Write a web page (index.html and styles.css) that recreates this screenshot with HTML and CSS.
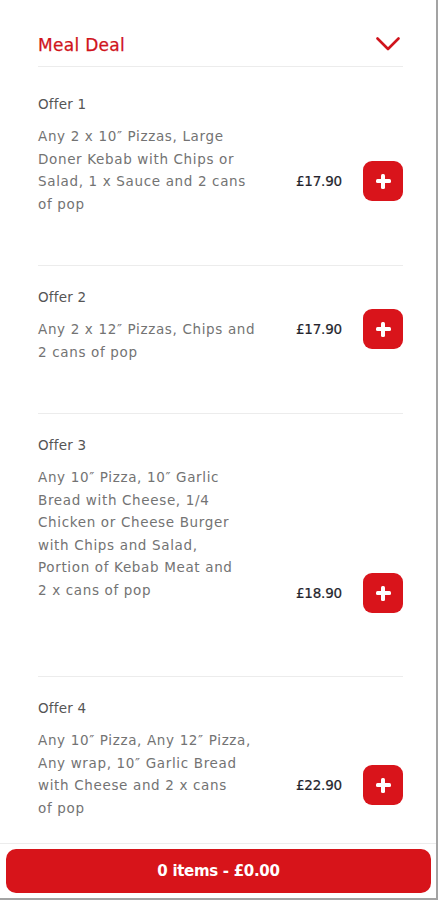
FILE: index.html
```html
<!DOCTYPE html>
<html lang="en">
<head>
<meta charset="utf-8">
<title>Meal Deal</title>
<link rel="stylesheet" href="styles.css">
</head>
<body>
<main class="page">
  <section class="category">
    <header class="category-head">
      <h2 class="category-title">Meal Deal</h2>
      <svg class="chevron" width="24" height="14" viewBox="0 0 24 14" aria-hidden="true">
        <polyline points="1.5,1.5 12,12 22.5,1.5" fill="none" stroke="#d0141c" stroke-width="2.6" stroke-linecap="round" stroke-linejoin="round"/>
      </svg>
    </header>
    <ul class="offers">
      <li class="offer offer--first">
        <h3 class="offer-title">Offer 1</h3>
        <p class="offer-desc">Any 2 x 10″ Pizzas, Large<br>Doner Kebab with Chips or<br>Salad, 1 x Sauce and 2 cans<br>of pop</p>
        <div class="offer-actions">
          <span class="offer-price">£17.90</span>
          <button class="add-btn" type="button" aria-label="Add Offer 1"><span class="plus"></span></button>
        </div>
      </li>
      <li class="offer">
        <h3 class="offer-title">Offer 2</h3>
        <p class="offer-desc">Any 2 x 12″ Pizzas, Chips and<br>2 cans of pop</p>
        <div class="offer-actions">
          <span class="offer-price">£17.90</span>
          <button class="add-btn" type="button" aria-label="Add Offer 2"><span class="plus"></span></button>
        </div>
      </li>
      <li class="offer offer--low">
        <h3 class="offer-title">Offer 3</h3>
        <p class="offer-desc">Any 10″ Pizza, 10″ Garlic<br>Bread with Cheese, 1/4<br>Chicken or Cheese Burger<br>with Chips and Salad,<br>Portion of Kebab Meat and<br>2 x cans of pop</p>
        <div class="offer-actions">
          <span class="offer-price">£18.90</span>
          <button class="add-btn" type="button" aria-label="Add Offer 3"><span class="plus"></span></button>
        </div>
      </li>
      <li class="offer">
        <h3 class="offer-title">Offer 4</h3>
        <p class="offer-desc">Any 10″ Pizza, Any 12″ Pizza,<br>Any wrap, 10″ Garlic Bread<br>with Cheese and 2 x cans<br>of pop</p>
        <div class="offer-actions">
          <span class="offer-price">£22.90</span>
          <button class="add-btn" type="button" aria-label="Add Offer 4"><span class="plus"></span></button>
        </div>
      </li>
    </ul>
  </section>
  <footer class="basket-bar">
    <button class="basket-btn" type="button">0 items - £0.00</button>
  </footer>
</main>
</body>
</html>
```

FILE: styles.css
```css
* {
  box-sizing: border-box;
}

html, body {
  margin: 0;
  padding: 0;
  background: #ffffff;
}

body {
  font-family: "DejaVu Sans", "Open Sans", sans-serif;
  color: #5a5a5a;
}

.page {
  width: 438px;
  min-height: 900px;
  padding: 0 33px 120px 38px;
  border-right: 2px solid #a3a3a3;
}

.category-head {
  display: flex;
  align-items: center;
  justify-content: space-between;
  padding: 33px 3px 9px 0;
  border-bottom: 1px solid #ececec;
}

.category-title {
  margin: 0;
  font-size: 17px;
  line-height: 24px;
  font-weight: normal;
  letter-spacing: 0.3px;
  color: #d0141c;
  -webkit-text-stroke: 0.25px #d0141c;
}

.chevron {
  display: block;
  margin-top: -2px;
}

.offers {
  list-style: none;
  margin: 0;
  padding: 0;
}

.offer {
  display: grid;
  grid-template-columns: 250px 1fr;
  grid-template-areas:
    "title actions"
    "desc actions";
  padding: 20px 0 50px;
  border-bottom: 1px solid #ececec;
}

.offer--first {
  padding-top: 26px;
}

.offer--low {
  padding-bottom: 75px;
}

.offer-title {
  grid-area: title;
  margin: 0 0 10px;
  font-size: 13.5px;
  line-height: 22px;
  font-weight: normal;
  letter-spacing: 0.2px;
  color: #555555;
}

.offer-desc {
  grid-area: desc;
  margin: 0;
  font-size: 13.5px;
  line-height: 22.5px;
  letter-spacing: 0.65px;
  color: #737373;
}

.offer-actions {
  grid-area: actions;
  justify-self: end;
  align-self: end;
  display: flex;
  align-items: center;
  gap: 21px;
  margin-bottom: 14px;
}

.offer--low .offer-actions {
  margin-bottom: -12px;
}

.offer-price {
  font-size: 13.5px;
  letter-spacing: -0.2px;
  color: #24242c;
  -webkit-text-stroke: 0.2px #24242c;
}

.add-btn {
  width: 40px;
  height: 40px;
  padding: 0;
  border: 0;
  border-radius: 9px;
  background: #d9141b;
  display: flex;
  align-items: center;
  justify-content: center;
  cursor: pointer;
}

.plus {
  position: relative;
  width: 15px;
  height: 15px;
}

.plus::before,
.plus::after {
  content: "";
  position: absolute;
  background: #ffffff;
  border-radius: 1.5px;
}

.plus::before {
  left: 0;
  top: 5.5px;
  width: 15px;
  height: 4px;
}

.plus::after {
  top: 0;
  left: 5.5px;
  width: 4px;
  height: 15px;
}

.basket-bar {
  position: fixed;
  left: 0;
  bottom: 0;
  width: 436px;
  padding: 5px 5px 5px 6px;
  background: #ffffff;
  border-top: 1px solid #ececec;
  border-bottom: 2px solid #a3a3a3;
}

.basket-btn {
  display: block;
  width: 100%;
  height: 44px;
  border: 0;
  border-radius: 10px;
  background: #d7141a;
  color: #ffffff;
  font-family: "DejaVu Sans", "Open Sans", sans-serif;
  font-size: 15px;
  font-weight: bold;
  letter-spacing: -0.3px;
  cursor: pointer;
}
```
